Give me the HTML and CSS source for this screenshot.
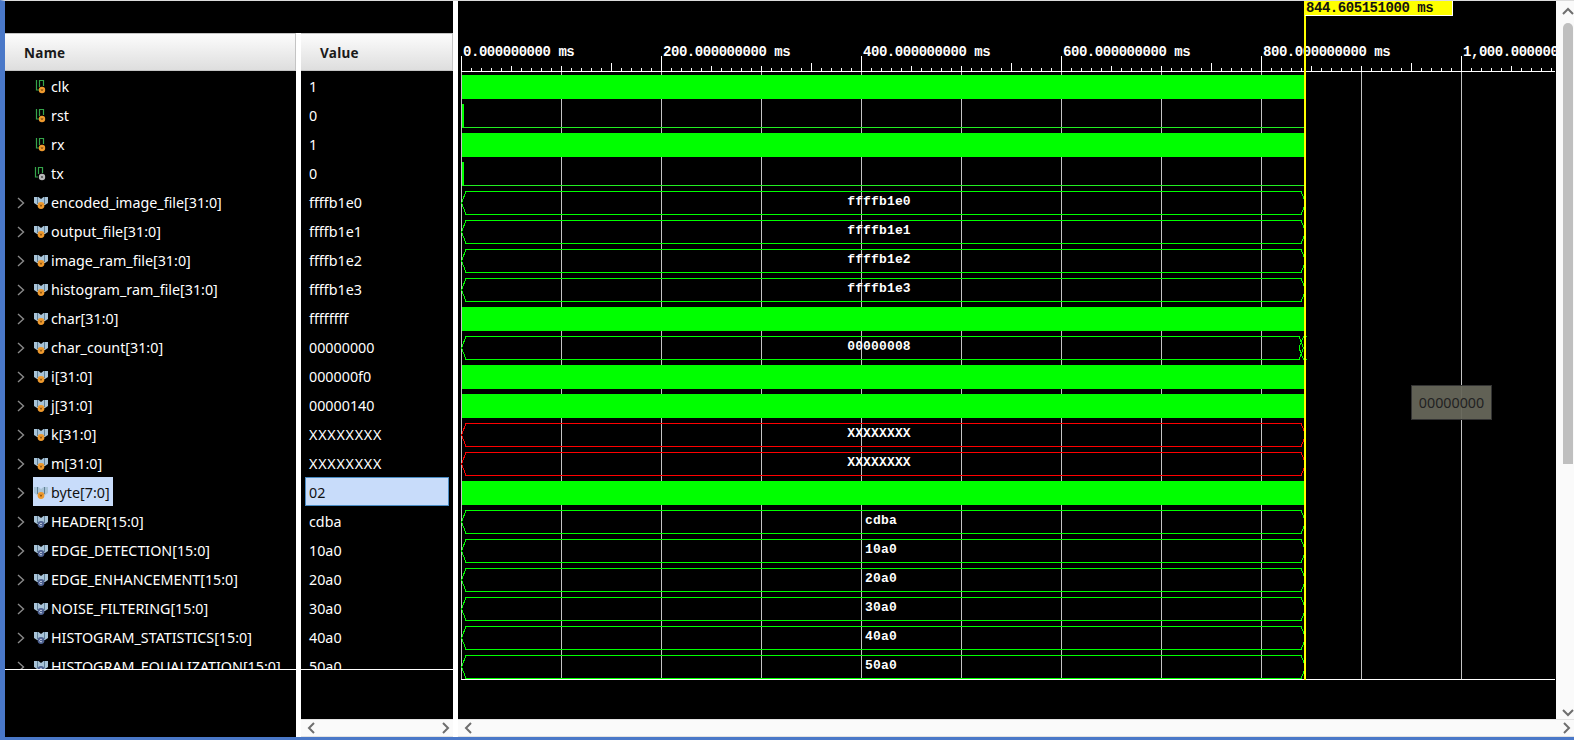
FILE: index.html
```html
<!DOCTYPE html>
<html lang="en">
<head>
  <meta charset="UTF-8">
  <title>Waveform Viewer</title>
  <link rel="stylesheet" href="styles.css">
</head>
<body>
  <svg class="defs" width="0" height="0">
    <symbol id="chev" viewBox="0 0 8 12"><path d="M1 1l5.5 5-5.500 5" fill="none" stroke="#8a8a8a" stroke-width="1.400"/></symbol>
    <symbol id="bit-v" viewBox="0 0 14 14">
      <path d="M2.500 0V10H5M5.500 0V7M9.500 0V6M5.500 .5H9.500" fill="none" stroke="#35a54a" stroke-width="1.200"/>
      <circle cx="8" cy="10" r="3.200" fill="#ef9a2e"/>
      <path d="M7 9l1 2 1-2" fill="none" stroke="#7a4a10" stroke-width=".8"/>
    </symbol>
    <symbol id="bit-g" viewBox="0 0 14 14">
      <path d="M1.500 0V10H4M4.500 0V7M8.500 0V6M4.500 .5H8.500" fill="none" stroke="#35a54a" stroke-width="1.200"/>
      <circle cx="8" cy="10" r="3.200" fill="#b8b8b8"/>
      <circle cx="8" cy="10" r="1.100" fill="#555"/>
    </symbol>
    <symbol id="bus-v" viewBox="0 0 14 14">
      <path d="M0 1H4.500L7 3 9.500 1H14V7L11 9H3L0 7Z" fill="#a9c4d8"/>
      <path d="M3.500 1V8M10.500 1V8" stroke="#5f7f96"/>
      <circle cx="7" cy="9.500" r="3.400" fill="#ef9a2e"/>
      <path d="M6 8.500l1 2 1-2" fill="none" stroke="#7a4a10" stroke-width=".8"/>
    </symbol>
    <symbol id="bus-c" viewBox="0 0 14 14">
      <path d="M0 1H4.500L7 3 9.500 1H14V7L11 9H3L0 7Z" fill="#a9c4d8"/>
      <path d="M3.500 1V8M10.500 1V8" stroke="#5f7f96"/>
      <circle cx="7" cy="9.500" r="3.400" fill="#4d6190"/>
      <path d="M8 8.800a1.300 1.300 0 1 0 0 1.500" fill="none" stroke="#dfe6f2" stroke-width=".8"/>
    </symbol>
    <symbol id="bus" viewBox="0 0 850 29"><path d="M5 3.500H840L845 15 840 26.500H5L.5 15Z" fill="none" stroke="currentColor" shape-rendering="crispEdges"/></symbol>
    <symbol id="bus-x" viewBox="0 0 850 29"><path d="M846 3.500H842.500L838 15 842.500 26.500H846M838 3.500L842.500 15 838 26.500H5L.5 15 5 3.500H838" fill="none" stroke="currentColor" shape-rendering="crispEdges"/></symbol>
  </svg>

  <div class="app">
    <!-- signal names -->
    <section class="pane names">
      <div class="pane-top"></div>
      <div class="col-head">Name</div>
      <div class="rows">
        <div class="row"><span class="chev-slot"></span><svg class="ico"><use href="#bit-v"/></svg><span class="cell">clk</span></div>
        <div class="row"><span class="chev-slot"></span><svg class="ico"><use href="#bit-v"/></svg><span class="cell">rst</span></div>
        <div class="row"><span class="chev-slot"></span><svg class="ico"><use href="#bit-v"/></svg><span class="cell">rx</span></div>
        <div class="row"><span class="chev-slot"></span><svg class="ico"><use href="#bit-g"/></svg><span class="cell">tx</span></div>
        <div class="row"><svg class="chev"><use href="#chev"/></svg><svg class="ico"><use href="#bus-v"/></svg><span class="cell">encoded_image_file[31:0]</span></div>
        <div class="row"><svg class="chev"><use href="#chev"/></svg><svg class="ico"><use href="#bus-v"/></svg><span class="cell">output_file[31:0]</span></div>
        <div class="row"><svg class="chev"><use href="#chev"/></svg><svg class="ico"><use href="#bus-v"/></svg><span class="cell">image_ram_file[31:0]</span></div>
        <div class="row"><svg class="chev"><use href="#chev"/></svg><svg class="ico"><use href="#bus-v"/></svg><span class="cell">histogram_ram_file[31:0]</span></div>
        <div class="row"><svg class="chev"><use href="#chev"/></svg><svg class="ico"><use href="#bus-v"/></svg><span class="cell">char[31:0]</span></div>
        <div class="row"><svg class="chev"><use href="#chev"/></svg><svg class="ico"><use href="#bus-v"/></svg><span class="cell">char_count[31:0]</span></div>
        <div class="row"><svg class="chev"><use href="#chev"/></svg><svg class="ico"><use href="#bus-v"/></svg><span class="cell">i[31:0]</span></div>
        <div class="row"><svg class="chev"><use href="#chev"/></svg><svg class="ico"><use href="#bus-v"/></svg><span class="cell">j[31:0]</span></div>
        <div class="row"><svg class="chev"><use href="#chev"/></svg><svg class="ico"><use href="#bus-v"/></svg><span class="cell">k[31:0]</span></div>
        <div class="row"><svg class="chev"><use href="#chev"/></svg><svg class="ico"><use href="#bus-v"/></svg><span class="cell">m[31:0]</span></div>
        <div class="row"><svg class="chev"><use href="#chev"/></svg><div class="picked"><svg class="ico"><use href="#bus-v"/></svg><span class="cell">byte[7:0]</span></div></div>
        <div class="row"><svg class="chev"><use href="#chev"/></svg><svg class="ico"><use href="#bus-c"/></svg><span class="cell">HEADER[15:0]</span></div>
        <div class="row"><svg class="chev"><use href="#chev"/></svg><svg class="ico"><use href="#bus-c"/></svg><span class="cell">EDGE_DETECTION[15:0]</span></div>
        <div class="row"><svg class="chev"><use href="#chev"/></svg><svg class="ico"><use href="#bus-c"/></svg><span class="cell">EDGE_ENHANCEMENT[15:0]</span></div>
        <div class="row"><svg class="chev"><use href="#chev"/></svg><svg class="ico"><use href="#bus-c"/></svg><span class="cell">NOISE_FILTERING[15:0]</span></div>
        <div class="row"><svg class="chev"><use href="#chev"/></svg><svg class="ico"><use href="#bus-c"/></svg><span class="cell">HISTOGRAM_STATISTICS[15:0]</span></div>
        <div class="row"><svg class="chev"><use href="#chev"/></svg><svg class="ico"><use href="#bus-c"/></svg><span class="cell">HISTOGRAM_EQUALIZATION[15:0]</span></div>
      </div>
    </section>

    <!-- current values -->
    <section class="pane values">
      <div class="pane-top"></div>
      <div class="col-head">Value</div>
      <div class="rows">
        <div class="row">1</div>
        <div class="row">0</div>
        <div class="row">1</div>
        <div class="row">0</div>
        <div class="row">ffffb1e0</div>
        <div class="row">ffffb1e1</div>
        <div class="row">ffffb1e2</div>
        <div class="row">ffffb1e3</div>
        <div class="row">ffffffff</div>
        <div class="row">00000000</div>
        <div class="row">000000f0</div>
        <div class="row">00000140</div>
        <div class="row unknown">XXXXXXXX</div>
        <div class="row unknown">XXXXXXXX</div>
        <div class="row picked-row"><div class="picked-value">02</div></div>
        <div class="row">cdba</div>
        <div class="row">10a0</div>
        <div class="row">20a0</div>
        <div class="row">30a0</div>
        <div class="row">40a0</div>
        <div class="row">50a0</div>
      </div>
      <div class="pane-fill"></div>
      <div class="hbar">
        <svg class="arrow" viewBox="0 0 8 12"><path d="M7 1L2 6l5 5"/></svg>
        <svg class="arrow" viewBox="0 0 8 12"><path d="M1 1l5 5-5 5"/></svg>
      </div>
    </section>

    <!-- waveform -->
    <section class="wave-pane">
      <div class="wave-main">
        <div class="canvas">
          <div class="ruler">
            <span class="tick-label at-0">0.000000000 ms</span>
            <span class="tick-label at-200">200.000000000 ms</span>
            <span class="tick-label at-400">400.000000000 ms</span>
            <span class="tick-label at-600">600.000000000 ms</span>
            <span class="tick-label at-800">800.000000000 ms</span>
            <span class="tick-label at-1000">1,000.000000000 ms</span>
          </div>
          <div class="tracks">
            <div class="track"><div class="solid"></div></div>
            <div class="track"><div class="low"></div></div>
            <div class="track"><div class="solid"></div></div>
            <div class="track"><div class="low"></div></div>
            <div class="track ok"><svg><use href="#bus"/></svg><span>ffffb1e0</span></div>
            <div class="track ok"><svg><use href="#bus"/></svg><span>ffffb1e1</span></div>
            <div class="track ok"><svg><use href="#bus"/></svg><span>ffffb1e2</span></div>
            <div class="track ok"><svg><use href="#bus"/></svg><span>ffffb1e3</span></div>
            <div class="track"><div class="solid"></div></div>
            <div class="track ok"><svg><use href="#bus-x"/></svg><span>00000008</span></div>
            <div class="track"><div class="solid"></div></div>
            <div class="track"><div class="solid"></div></div>
            <div class="track bad"><svg><use href="#bus"/></svg><span>XXXXXXXX</span></div>
            <div class="track bad"><svg><use href="#bus"/></svg><span>XXXXXXXX</span></div>
            <div class="track"><div class="solid"></div></div>
            <div class="track ok short"><svg><use href="#bus"/></svg><span>cdba</span></div>
            <div class="track ok short"><svg><use href="#bus"/></svg><span>10a0</span></div>
            <div class="track ok short"><svg><use href="#bus"/></svg><span>20a0</span></div>
            <div class="track ok short"><svg><use href="#bus"/></svg><span>30a0</span></div>
            <div class="track ok short"><svg><use href="#bus"/></svg><span>40a0</span></div>
            <div class="track ok short"><svg><use href="#bus"/></svg><span>50a0</span></div>
          </div>
          <div class="cursor"></div>
          <div class="cursor-tag">844.605151000 ms</div>
          <div class="hover-tip">00000000</div>
        </div>
        <div class="vbar">
          <svg class="arrow-v" viewBox="0 0 12 8"><path d="M1 7l5-5 5 5"/></svg>
          <div class="thumb"></div>
          <svg class="arrow-v" viewBox="0 0 12 8"><path d="M1 1l5 5 5-5"/></svg>
        </div>
      </div>
      <div class="hbar">
        <svg class="arrow" viewBox="0 0 8 12"><path d="M7 1L2 6l5 5"/></svg>
        <svg class="arrow" viewBox="0 0 8 12"><path d="M1 1l5 5-5 5"/></svg>
      </div>
    </section>
  </div>
</body>
</html>
```

FILE: styles.css
```css
html, body {
  margin: 0;
  padding: 0;
  background-color: #fff;
}

.defs {
  position: absolute;
}

.app {
  display: flex;
  gap: 5px;
  width: 1569px;
  height: 736px;
  background-color: #fff;
  border-top: 1px solid #dcdcdc;
  border-left: 5px solid #4a78c8;
  border-bottom: 3px solid #4a78c8;
  font-family: "Noto Sans", sans-serif;
  font-size: 14.3px;
  color: #fff;
}

.pane {
  display: flex;
  flex-direction: column;
  background-color: #000;
}

.names {
  width: 291px;
}

.values {
  width: 152px;
}

.pane-top {
  height: 32px;
  flex: none;
  background-color: #000;
}

/* the black strip above the headers runs over the white divider */
.names .pane-top {
  margin-right: -5px;
}

.pane-fill {
  flex: 1;
}

.col-head {
  height: 38px;
  flex: none;
  box-sizing: border-box;
  display: flex;
  align-items: center;
  padding-left: 19px;
  padding-top: 2px;
  background: linear-gradient(#fcfcfc, #dedede);
  border: 1px solid #c4c4c4;
  border-left: none;
  color: #1a1a1a;
  font-weight: 700;
  font-size: 13.5px;
  letter-spacing: 0.3px;
}

.rows {
  height: 598px;
  flex: none;
  overflow: hidden;
  border-bottom: 1px solid #fff;
}

.row {
  height: 29px;
  box-sizing: border-box;
  padding-top: 2px;
  display: flex;
  align-items: center;
}

.values .row {
  padding-left: 8px;
}

.values .unknown {
  letter-spacing: 0.75px;
}

.chev-slot,
.chev {
  width: 8px;
  height: 12px;
  margin-left: 12px;
  flex: none;
}

.ico {
  width: 14px;
  height: 14px;
  margin-left: 9px;
  flex: none;
}

.cell {
  margin-left: 3px;
  white-space: nowrap;
}

.picked {
  box-sizing: border-box;
  display: flex;
  align-items: center;
  height: 29px;
  margin-top: -2px;
  margin-left: 8px;
  padding: 2px 3px 0 1px;
  background-color: #c8dcfa;
  color: #111;
}

.picked .ico {
  margin-left: 0;
}

.values .picked-row {
  padding-left: 4px;
}

.picked-value {
  box-sizing: border-box;
  width: 144px;
  height: 29px;
  margin-top: -2px;
  display: flex;
  align-items: center;
  padding: 2px 0 0 3px;
  background-color: #c8dcfa;
  border: 1px solid #4a8cc4;
  color: #111;
}

/* bottom scroll strip */
.hbar {
  height: 18px;
  flex: none;
  box-sizing: border-box;
  display: flex;
  justify-content: space-between;
  align-items: center;
  padding: 0 3px 0 6px;
  background-color: #fafafa;
  border-top: 1px solid #e2e2e2;
  border-bottom: 1px solid #e2e2e2;
}

.arrow {
  width: 8px;
  height: 12px;
}

.arrow path,
.arrow-v path {
  fill: none;
  stroke: #6e6e6e;
  stroke-width: 2;
}

.wave-pane {
  flex: 1;
  display: flex;
  flex-direction: column;
  min-width: 0;
}

.wave-main {
  flex: 1;
  display: flex;
  min-height: 0;
}

.canvas {
  position: relative;
  width: 1098px;
  background-color: #000;
  overflow: hidden;
}

.vbar {
  flex: 1;
  display: flex;
  flex-direction: column;
  align-items: center;
  padding: 6px 0 2px 5px;
  background-color: #fafafa;
  box-sizing: border-box;
}

.arrow-v {
  width: 12px;
  height: 8px;
  flex: none;
}

.thumb {
  width: 10px;
  height: 441px;
  margin-top: 8px;
  margin-bottom: auto;
  background-color: #bfbfbf;
  border-radius: 5px 5px 0 0;
}

/* time ruler */
.ruler {
  position: relative;
  box-sizing: border-box;
  width: 1094px;
  height: 71px;
  margin-left: 3px;
  border-bottom: 1px solid #fff;
  background-image:
    linear-gradient(90deg, #fff 1px, transparent 1px),
    linear-gradient(90deg, #fff 1px, transparent 1px),
    linear-gradient(90deg, #fff 1px, transparent 1px),
    linear-gradient(90deg, #fff 1px, transparent 1px),
    linear-gradient(90deg, #fff 1px, transparent 1px);
  background-repeat: repeat-x;
  background-position: 0 100%, 50px 100%, 100px 100%, 150px 100%, 0 100%;
  background-size: 200px 15px, 200px 5px, 200px 5px, 200px 8px, 10px 3px;
}

.tick-label {
  position: absolute;
  top: 44px;
  font-family: "Liberation Mono", monospace;
  font-weight: 700;
  font-size: 14px;
  letter-spacing: -0.45px;
  line-height: 15px;
  white-space: nowrap;
  color: #fff;
}

.at-0 { left: 2px; }
.at-200 { left: 202px; }
.at-400 { left: 402px; }
.at-600 { left: 602px; }
.at-800 { left: 802px; }
.at-1000 { left: 1002px; }

/* signal tracks */
.tracks {
  box-sizing: border-box;
  width: 1094px;
  height: 608px;
  margin-left: 3px;
  overflow: hidden;
  border-bottom: 1px solid #fff;
  background-image: repeating-linear-gradient(90deg, #c4c4c4 0, #c4c4c4 1px, transparent 1px, transparent 100px);
}

.track {
  position: relative;
  width: 844px;
  height: 29px;
  display: flex;
  justify-content: center;
  align-items: center;
  font-family: "Liberation Mono", monospace;
  font-weight: 700;
  font-size: 13px;
  letter-spacing: 0.15px;
  color: #fff;
}

.track svg {
  position: absolute;
  left: 0;
  top: 0;
  width: 850px;
  height: 29px;
}

.track span {
  position: relative;
  margin-top: -2px;
  margin-right: 8px;
}

.short span {
  margin-right: 4px;
}

.ok svg {
  color: #00ff00;
}

.bad svg {
  color: #ff0000;
}

.solid {
  align-self: flex-start;
  width: 843px;
  height: 24px;
  margin-top: 3px;
  background-color: #00ff00;
}

/* rises for a moment at time zero, then stays low */
.low {
  align-self: flex-start;
  box-sizing: border-box;
  width: 843px;
  height: 24px;
  margin-top: 3px;
  border-left: 2px solid #00ff00;
  border-bottom: 1px solid #22ee22;
}

/* markers on top of the waves */
.cursor {
  position: absolute;
  left: 846px;
  top: 0;
  width: 2px;
  height: 679px;
  background-color: #ffff00;
}

.cursor-tag {
  position: absolute;
  left: 847px;
  top: 0;
  width: 148px;
  height: 15px;
  box-sizing: border-box;
  padding-left: 1px;
  background-color: #ffff00;
  border-right: 1px solid #fff;
  border-bottom: 1px solid #fff;
  font-family: "Liberation Mono", monospace;
  font-weight: 700;
  font-size: 14px;
  letter-spacing: -0.45px;
  line-height: 15px;
  white-space: nowrap;
  color: #111;
}

.hover-tip {
  position: absolute;
  left: 953px;
  top: 384px;
  width: 81px;
  height: 35px;
  box-sizing: border-box;
  display: flex;
  justify-content: center;
  align-items: center;
  background-color: rgba(102, 102, 90, 0.95);
  border: 1px solid #333;
  color: #222;
}
```
